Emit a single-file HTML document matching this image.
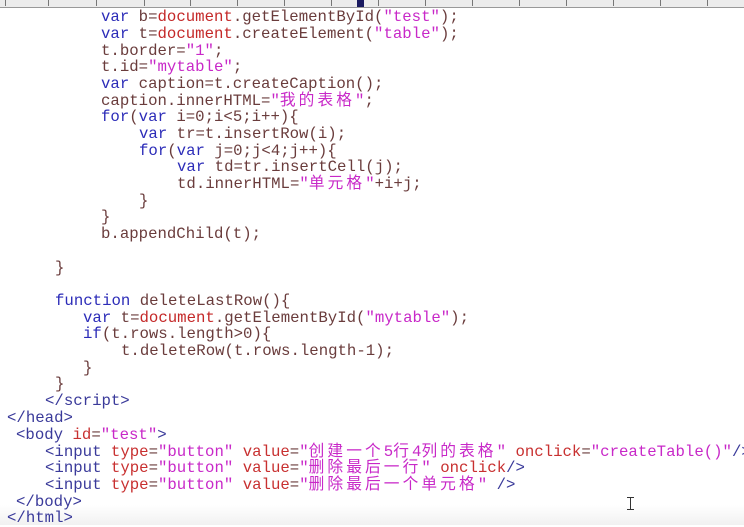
<!DOCTYPE html>
<html><head><meta charset="utf-8"><style>
body{margin:0;width:744px;height:525px;background:#fff;overflow:hidden;position:relative;font-family:"Liberation Mono","Noto Sans CJK SC",monospace;font-size:15.7px;color:#6a3c3c}
.l{position:absolute;white-space:pre;line-height:17px}
.k{color:#2c2cb8}.d{color:#c42828}.s{color:#c828c8}.t{color:#3a3a9a}.a{color:#c83030}
.c{letter-spacing:3.1px}
.ruler{position:absolute;left:0;top:0;width:744px;height:7px;background:#ececec;border-bottom:1px solid #999}
.tick{position:absolute;top:0;width:1px;height:6px;background:#777}
.bot{position:absolute;left:0;top:505px;width:744px;height:20px;background:linear-gradient(#fff,#f1f1f1)}
</style></head><body>
<div class="ruler">
<div class="tick" style="left:5px"></div><div class="tick" style="left:48px"></div><div class="tick" style="left:96px"></div><div class="tick" style="left:144px"></div><div class="tick" style="left:190px"></div><div class="tick" style="left:237px"></div><div class="tick" style="left:284px"></div><div class="tick" style="left:331px"></div><div class="tick" style="left:378px"></div><div class="tick" style="left:425px"></div><div class="tick" style="left:472px"></div><div class="tick" style="left:519px"></div><div class="tick" style="left:566px"></div><div class="tick" style="left:613px"></div><div class="tick" style="left:660px"></div><div class="tick" style="left:707px"></div>
<div style="position:absolute;left:357px;top:0;width:7px;height:7px;background:#1a1a60"></div>
</div>
<div class="bot"></div>
<div class="l" style="left:101px;top:9px"><span class="k">var</span> b=<span class="d">document</span>.getElementById(<span class="s">"test"</span>);</div>
<div class="l" style="left:101px;top:26px"><span class="k">var</span> t=<span class="d">document</span>.createElement(<span class="s">"table"</span>);</div>
<div class="l" style="left:101px;top:43px">t.border=<span class="s">"1"</span>;</div>
<div class="l" style="left:101px;top:59px">t.id=<span class="s">"mytable"</span>;</div>
<div class="l" style="left:101px;top:76px"><span class="k">var</span> caption=t.createCaption();</div>
<div class="l" style="left:101px;top:93px">caption.innerHTML=<span class="s">"<span class="c">我的表格</span>"</span>;</div>
<div class="l" style="left:101px;top:109px"><span class="k">for</span>(<span class="k">var</span> i=0;i&lt;5;i++){</div>
<div class="l" style="left:139px;top:126px"><span class="k">var</span> tr=t.insertRow(i);</div>
<div class="l" style="left:139px;top:143px"><span class="k">for</span>(<span class="k">var</span> j=0;j&lt;4;j++){</div>
<div class="l" style="left:177px;top:159px"><span class="k">var</span> td=tr.insertCell(j);</div>
<div class="l" style="left:177px;top:176px">td.innerHTML=<span class="s">"<span class="c">单元格</span>"</span>+i+j;</div>
<div class="l" style="left:139px;top:193px">}</div>
<div class="l" style="left:101px;top:209px">}</div>
<div class="l" style="left:101px;top:226px">b.appendChild(t);</div>
<div class="l" style="left:55px;top:260px">}</div>
<div class="l" style="left:55px;top:293px"><span class="k">function</span> deleteLastRow(){</div>
<div class="l" style="left:83px;top:310px"><span class="k">var</span> t=<span class="d">document</span>.getElementById(<span class="s">"mytable"</span>);</div>
<div class="l" style="left:83px;top:326px"><span class="k">if</span>(t.rows.length&gt;0){</div>
<div class="l" style="left:121px;top:343px">t.deleteRow(t.rows.length-1);</div>
<div class="l" style="left:83px;top:360px">}</div>
<div class="l" style="left:55px;top:376px">}</div>
<div class="l t" style="left:45px;top:393px">&lt;/script&gt;</div>
<div class="l t" style="left:7px;top:410px">&lt;/head&gt;</div>
<div class="l" style="left:16px;top:427px"><span class="t">&lt;body</span> <span class="a">id</span>=<span class="s">"test"</span><span class="t">&gt;</span></div>
<div class="l" style="left:45px;top:444px"><span class="t">&lt;input</span> <span class="a">type</span>=<span class="s">"button"</span> <span class="a">value</span>=<span class="s">"<span class="c">创建一个</span>5<span class="c">行</span>4<span class="c">列的表格</span>"</span> <span class="a">onclick</span>=<span class="s">"createTable()"</span><span class="t">/&gt;</span></div>
<div class="l" style="left:45px;top:460px"><span class="t">&lt;input</span> <span class="a">type</span>=<span class="s">"button"</span> <span class="a">value</span>=<span class="s">"<span class="c">删除最后一行</span>"</span> <span class="a">onclick</span><span class="t">/&gt;</span></div>
<div class="l" style="left:45px;top:477px"><span class="t">&lt;input</span> <span class="a">type</span>=<span class="s">"button"</span> <span class="a">value</span>=<span class="s">"<span class="c">删除最后一个单元格</span>"</span> <span class="t">/&gt;</span></div>
<div class="l t" style="left:16px;top:494px">&lt;/body&gt;</div>
<div class="l t" style="left:7px;top:510px">&lt;/html&gt;</div>
<div style="position:absolute;left:630px;top:497px;width:1px;height:13px;background:#333"></div>
<div style="position:absolute;left:627px;top:497px;width:7px;height:1px;background:#333"></div>
<div style="position:absolute;left:627px;top:509px;width:7px;height:1px;background:#333"></div>
</body></html>
